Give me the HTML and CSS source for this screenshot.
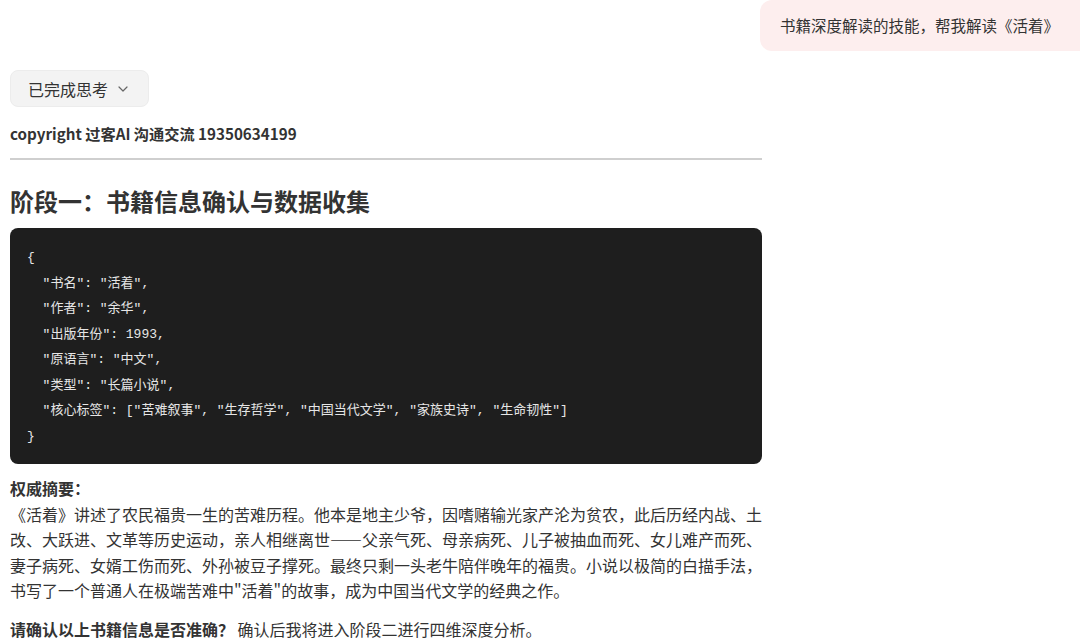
FILE: index.html
```html
<!DOCTYPE html>
<html lang="zh-CN">
<head>
  <meta charset="UTF-8">
  <meta name="viewport" content="width=device-width, initial-scale=1.0">
  <title>书籍深度解读 - 活着</title>
  <link rel="stylesheet" href="styles.css">
</head>
<body>
  <div class="user-row">
    <div class="user-bubble">书籍深度解读的技能，帮我解读《活着》</div>
  </div>

  <div class="answer">
    <button class="think-toggle">
      已完成思考
      <svg width="10" height="6" viewBox="0 0 10 6"><path d="M1 1l4 4 4-4" fill="none" stroke="#666" stroke-width="1.2" stroke-linecap="round" stroke-linejoin="round"/></svg>
    </button>

    <p class="copyright">copyright 过客AI 沟通交流 19350634199</p>
    <hr>

    <h2>阶段一：书籍信息确认与数据收集</h2>

<pre class="code-block">{
  "书名": "活着",
  "作者": "余华",
  "出版年份": 1993,
  "原语言": "中文",
  "类型": "长篇小说",
  "核心标签": ["苦难叙事", "生存哲学", "中国当代文学", "家族史诗", "生命韧性"]
}</pre>

    <p class="summary">
      <strong>权威摘要：</strong><br>
      《活着》讲述了农民福贵一生的苦难历程。他本是地主少爷，因嗜赌输光家产沦为贫农，此后历经内战、土改、大跃进、文革等历史运动，亲人相继离世——父亲气死、母亲病死、儿子被抽血而死、女儿难产而死、妻子病死、女婿工伤而死、外孙被豆子撑死。最终只剩一头老牛陪伴晚年的福贵。小说以极简的白描手法，书写了一个普通人在极端苦难中"活着"的故事，成为中国当代文学的经典之作。
    </p>

    <p class="confirm"><strong>请确认以上书籍信息是否准确？</strong> 确认后我将进入阶段二进行四维深度分析。</p>
  </div>
</body>
</html>
```

FILE: styles.css
```css
body {
  font-family: "Noto Sans CJK SC", "Noto Sans", sans-serif;
  background-color: #fff;
  color: #333;
  margin: 0;
  padding: 0;
  overflow: hidden;
}
.user-row {
  display: flex;
  justify-content: flex-end;
}
.user-bubble {
  background: #fdeeee;
  color: #333;
  font-size: 15.5px;
  line-height: 25px;
  padding: 13px 20px 13px 20px;
  border-radius: 12px 0 0 12px;
  width: 280px;
}
.answer {
  width: 752px;
  margin: 19px 0 0 10px;
}
.think-toggle {
  display: flex;
  align-items: center;
  gap: 10px;
  background: #f3f3f3;
  border: 1px solid #ececec;
  border-radius: 8px;
  height: 37px;
  padding: 0 20px 0 17px;
  font-family: inherit;
  font-size: 16px;
  color: #333;
  cursor: pointer;
}
.copyright {
  font-size: 15.2px;
  font-weight: 600;
  line-height: 25px;
  margin: 14px 0 0;
  color: #333;
}
hr {
  border: none;
  border-top: 2px solid #cfcfcf;
  margin: 12px 0 0;
}
h2 {
  font-size: 24px;
  line-height: 34px;
  font-weight: 700;
  margin: 24px 0 10px;
  color: #333;
}
.code-block {
  background: #1e1e1e;
  color: #e6e6e6;
  border-radius: 8px;
  margin: 0;
  padding: 17px 17px 15px;
  font-family: "Liberation Mono", "Noto Sans CJK SC", monospace;
  font-size: 13px;
  line-height: 25.5px;
}
.summary {
  font-size: 16px;
  line-height: 25.5px;
  margin: 12px -4px 0 0;
}
.confirm {
  font-size: 16px;
  line-height: 25.5px;
  margin: 13px 0 0;
}
```
